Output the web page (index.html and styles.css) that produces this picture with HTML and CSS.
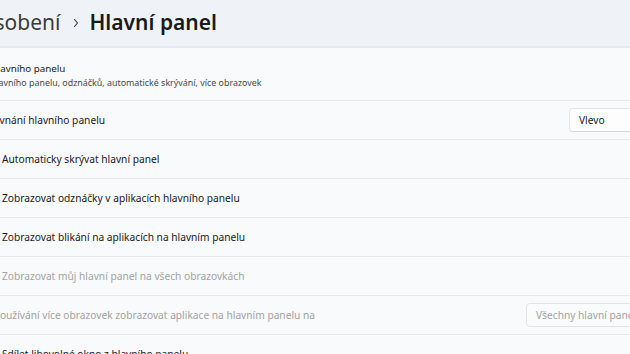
FILE: index.html
```html
<!DOCTYPE html>
<html lang="cs">
<head>
    <meta charset="UTF-8">
    <meta name="viewport" content="width=device-width, initial-scale=1.0">
    <title>Hlavní panel</title>
    <link rel="stylesheet" href="styles.css">
</head>
<body>
    <header class="page-header">
        <div class="crumbs">
            <span class="crumb-prev">Přizpůsobení</span>
            <span class="crumb-sep">
                <svg width="8" height="10" viewBox="0 0 8 10"><path d="M2.5 1.5 L5.5 5 L2.5 8.5" fill="none" stroke="#333" stroke-width="1.1" stroke-linecap="round" stroke-linejoin="round"/></svg>
            </span>
            <span class="crumb-current">Hlavní panel</span>
        </div>
    </header>

    <main class="panel">
        <div class="row row-head">
            <div class="head-text">
                <div class="head-title">Chování hlavního panelu</div>
                <div class="head-sub">Zarovnání hlavního panelu, odznáčků, automatické skrývání, více obrazovek</div>
            </div>
        </div>

        <div class="row row-label">
            <span class="label">Zarovnání hlavního panelu</span>
            <div class="select">Vlevo</div>
        </div>

        <div class="row row-check">
            <span class="check"></span>
            <span class="label">Automaticky skrývat hlavní panel</span>
        </div>

        <div class="row row-check">
            <span class="check"></span>
            <span class="label">Zobrazovat odznáčky v aplikacích hlavního panelu</span>
        </div>

        <div class="row row-check">
            <span class="check"></span>
            <span class="label">Zobrazovat blikání na aplikacích na hlavním panelu</span>
        </div>

        <div class="row row-check disabled">
            <span class="check"></span>
            <span class="label">Zobrazovat můj hlavní panel na všech obrazovkách</span>
        </div>

        <div class="row row-label disabled">
            <span class="label">Při používání více obrazovek zobrazovat aplikace na hlavním panelu na</span>
            <div class="select select-wide">Všechny hlavní panely</div>
        </div>

        <div class="row row-check">
            <span class="check"></span>
            <span class="label">Sdílet libovolné okno z hlavního panelu</span>
        </div>
    </main>
</body>
</html>
```

FILE: styles.css
```css
body {
    margin: 0;
    background-color: #f9fafb;
    color: #1b1b1b;
    font-family: "Noto Sans", "Open Sans", sans-serif;
    overflow: hidden;
    width: 630px;
    height: 354px;
}

.page-header {
    background-color: #eff3f7;
    height: 46px;
    border-bottom: 2px solid #e6e9ed;
    overflow: hidden;
}

.crumbs {
    display: flex;
    align-items: center;
    margin-left: -68px;
    height: 44px;
    white-space: nowrap;
}

.crumb-prev {
    font-size: 21px;
    color: #3b3b3b;
}

.crumb-sep {
    display: flex;
    align-items: center;
    margin: 2px 9px 0 12px;
}

.crumb-current {
    font-size: 21px;
    font-weight: 600;
    color: #1a1a1a;
}

.panel {
    margin-left: -60px;
    white-space: nowrap;
}

.row {
    display: flex;
    align-items: center;
    height: 38px;
    border-bottom: 1px solid #e7e8ea;
    font-size: 10.2px;
}

.row-head {
    height: 52px;
    padding-left: 7px;
}

.head-title {
    font-size: 9.8px;
    margin-left: 5px;
    margin-top: 3px;
}

.head-sub {
    font-size: 8.9px;
    color: #4a4a4a;
    margin-top: 1px;
}

.row-label {
    padding-left: 38px;
    justify-content: space-between;
}

.row-check {
    padding-left: 38px;
}

.check {
    width: 18px;
    height: 18px;
    border: 1px solid #888;
    border-radius: 4px;
    margin-right: 4px;
    flex-shrink: 0;
}

.select {
    width: 80px;
    height: 22px;
    margin-right: -30px;
    background-color: #fdfdfd;
    border: 1px solid #e4e4e4;
    border-bottom-color: #d6d6d6;
    border-radius: 4px;
    display: flex;
    align-items: center;
    padding-left: 9px;
    font-size: 10.2px;
    color: #1b1b1b;
}

.select-wide {
    width: 123px;
    margin-right: -30px;
    background-color: #fafbfc;
    border-bottom-color: #e4e4e4;
}

.disabled .label,
.disabled .select {
    color: #a3a3a3;
}
```
